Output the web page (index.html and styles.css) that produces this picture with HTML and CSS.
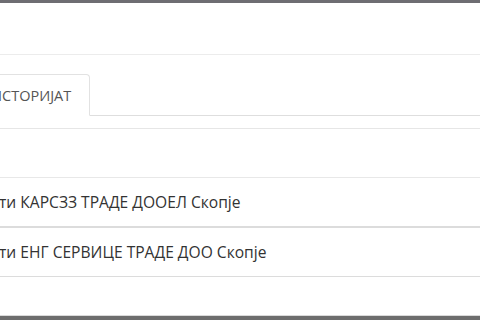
FILE: index.html
```html
<!DOCTYPE html>
<html lang="mk">
<head>
    <meta charset="UTF-8">
    <title>Историјат</title>
    <link rel="stylesheet" href="styles.css">
</head>
<body>
<div class="topbar"></div>
<div class="header"></div>
<div class="panel">
    <ul class="tabs">
        <li class="tab active">ИСТОРИЈАТ</li>
    </ul>
    <div class="tab-content">
        <ul class="history">
            <li class="item">ти КАРСЗЗ ТРАДЕ ДООЕЛ Скопје</li>
            <li class="item">ти ЕНГ СЕРВИЦЕ ТРАДЕ ДОО Скопје</li>
        </ul>
    </div>
</div>
<div class="bottombar"></div>
</body>
</html>
```

FILE: styles.css
```css
*{
    margin:0;
    padding:0;
    box-sizing: border-box;
}
html, body{
    width:480px;
    height:320px;
    overflow: hidden;
}
body{
    font-family: "Open Sans", "Noto Sans", sans-serif;
    color:#333;
    background:#fff;
    display: flex;
    flex-direction: column;
}
.topbar{
    height:3px;
    background-color:#6e6d72;
}
.header{
    height:52px;
    border-bottom:1px solid #ececec;
}
.panel{
    flex:1;
}
.tabs{
    list-style: none;
    display: flex;
    margin-top:19px;
    border-bottom:1px solid #dedede;
}
.tab{
    height:42px;
    margin-left:-10px;
    margin-bottom:-1px;
    padding:0 19px 0 0;
    width:100px;
    text-align: right;
    white-space: nowrap;
    line-height:42px;
    font-size:14.5px;
    color:#555;
    border:1px solid #e2e2e2;
    border-bottom-color: transparent;
    border-radius:0 4px 0 0;
    background:#fff;
}
.tab-content{
    margin-top:12px;
    border-top:1px solid #e6e6e6;
    padding-top:48px;
}
.history{
    list-style: none;
}
.item{
    height:50px;
    line-height:48px;
    font-size:15.6px;
    margin-left:-1px;
    border-top:1px solid #e8e8e8;
    border-bottom:1px solid #dcdcdc;
}
.item + .item{
    border-top-color:#dcdcdc;
}
.bottombar{
    height:5px;
    border-top:1px solid #dadada;
    background-color:#6d6d6d;
}
```
